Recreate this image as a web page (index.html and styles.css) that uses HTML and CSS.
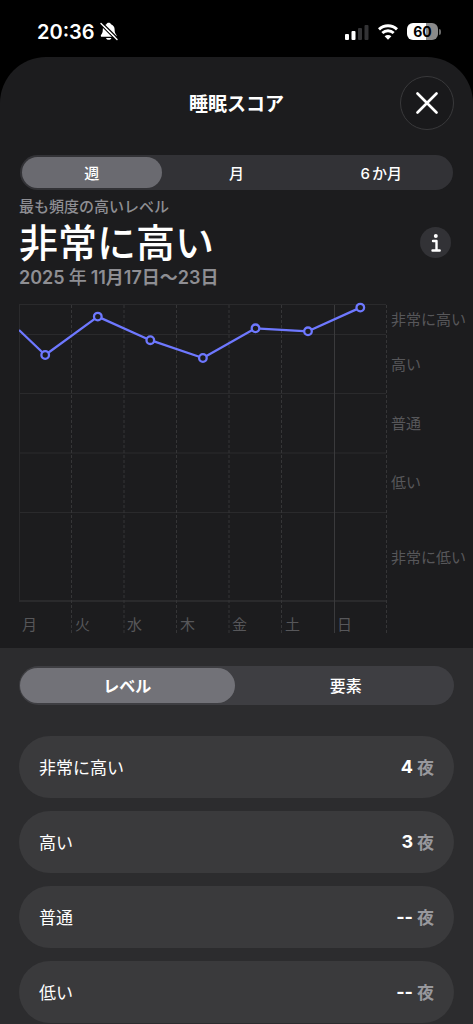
FILE: index.html
```html
<!DOCTYPE html>
<html lang="ja">
<head>
<meta charset="utf-8">
<meta name="viewport" content="width=device-width, initial-scale=1">
<title>睡眠スコア</title>
<link rel="stylesheet" href="styles.css">
</head>
<body>
<header class="status">
  <div class="status-left">
    <time class="clock">20:36</time>
    <svg class="bell" width="18" height="19" viewBox="0 0 18 19" aria-hidden="true">
      <path d="M8.700 .8C10 .8 10.800 1.400 11 2.300C13.600 3.300 14.600 5.200 14.600 7.600C14.600 10.600 15.300 11.700 16.400 13C16.900 13.800 16.500 14.800 15.600 14.800H1.800C.9 14.800.5 13.800 1 13C2.100 11.700 2.800 10.600 2.800 7.600C2.800 5.200 3.800 3.300 6.400 2.300C6.600 1.400 7.400 .8 8.700 .8Z" fill="#fff"/>
      <path d="M6 15.900H11.400C11 17.200 9.900 17.800 8.700 17.800S6.400 17.200 6 15.900Z" fill="#fff"/>
      <path d="M2 .5L18 16.500" stroke="#000" stroke-width="1.300"/>
      <path d="M.2 2.300L16.200 18.300" stroke="#000" stroke-width="1.300"/>
      <path d="M1 1.500L17 17.500" stroke="#fff" stroke-width="1.400" stroke-linecap="round"/>
    </svg>
  </div>
  <div class="status-right">
    <svg width="24" height="16" viewBox="0 0 24 16" aria-hidden="true">
      <rect x="0" y="10" width="4" height="6" rx="1" fill="#fff"/>
      <rect x="6.500" y="7" width="4" height="9" rx="1" fill="#fff"/>
      <rect x="13" y="4" width="4" height="12" rx="1" fill="#333335"/>
      <rect x="19.500" y="1" width="4" height="15" rx="1" fill="#333335"/>
    </svg>
    <svg width="20" height="16" viewBox="0 0 20 16" aria-hidden="true">
      <path d="M1 5.400C6 .6 14 .6 19 5.400M4.300 9C7.600 6 12.400 6 15.700 9" fill="none" stroke="#fff" stroke-width="2.900"/>
      <path d="M10 15.800L6.600 12.300C8.500 10.600 11.500 10.600 13.400 12.300Z" fill="#fff"/>
    </svg>
    <span class="battery"><span class="battery-body">60</span><span class="battery-cap"></span></span>
  </div>
</header>
<main class="sheet">
  <div class="titlebar">
    <h1 class="title">睡眠スコア</h1>
    <button class="close" type="button" aria-label="閉じる">
      <svg width="22" height="22" viewBox="0 0 22 22" aria-hidden="true"><path d="M1.500 1.500L20.500 20.500M20.500 1.500L1.500 20.500" stroke="#fff" stroke-width="2.600" stroke-linecap="round"/></svg>
    </button>
  </div>
  <div class="segments period" role="group" aria-label="期間">
    <button class="segment selected" type="button" aria-pressed="true">週</button>
    <button class="segment" type="button" aria-pressed="false">月</button>
    <button class="segment" type="button" aria-pressed="false"><span class="count">6</span>か月</button>
  </div>
  <section class="summary">
    <div class="summary-text">
      <p class="caption">最も頻度の高いレベル</p>
      <h2 class="level">非常に高い</h2>
      <p class="range">2025<span class="spaced">年</span>11月17日<span>〜</span>23日</p>
    </div>
    <button class="info" type="button" aria-label="情報">
      <svg width="10" height="18" viewBox="0 0 10 18" aria-hidden="true">
        <circle cx="4.800" cy="2" r="2" fill="#fff"/>
        <path d="M2 7H5.500V16.300M1.500 16.500H8.700" fill="none" stroke="#fff" stroke-width="2.400" stroke-linecap="round" stroke-linejoin="round"/>
      </svg>
    </button>
  </section>
  <svg class="chart" viewBox="0 0 454 332" role="img" aria-label="睡眠スコアの週間グラフ">
    <path class="grid" d="M0 2.500H367M0 32.500H367M0 91.500H367M0 151H367M0 210.500H367M.5 2V299"/>
    <path class="axis" d="M0 299H367"/>
    <path class="day-line" d="M52.500 3V331M105 3V331M157.500 3V331M210 3V331M262.500 3V331M367.500 3V331"/>
    <path class="week-line" d="M315.500 3V331"/>
    <path class="trend" d="M0 28L26.200 53L78.800 14.600L131.300 38.200L183.900 56L236.500 26.300L289 29.300L341.300 5.600"/>
    <g class="points">
      <circle cx="26.200" cy="53" r="3.800"/><circle cx="78.800" cy="14.600" r="3.800"/><circle cx="131.300" cy="38.200" r="3.800"/><circle cx="183.900" cy="56" r="3.800"/><circle cx="236.500" cy="26.300" r="3.800"/><circle cx="289" cy="29.300" r="3.800"/><circle cx="341.300" cy="5.600" r="3.800"/>
    </g>
    <g class="labels">
      <text x="372" y="23">非常に高い</text><text x="372" y="68">高い</text><text x="372" y="127">普通</text><text x="372" y="186">低い</text><text x="372" y="261">非常に低い</text>
      <text x="3" y="328">月</text><text x="56" y="328">火</text><text x="108" y="328">水</text><text x="161" y="328">木</text><text x="213" y="328">金</text><text x="266" y="328">土</text><text x="318" y="328">日</text>
    </g>
  </svg>
  <section class="details">
    <div class="segments view" role="group" aria-label="表示">
      <button class="segment selected" type="button" aria-pressed="true">レベル</button>
      <button class="segment" type="button" aria-pressed="false">要素</button>
    </div>
    <ul class="rows">
      <li class="row"><span>非常に高い</span><span class="nights"><b>4</b><span class="unit">夜</span></span></li>
      <li class="row"><span>高い</span><span class="nights"><b>3</b><span class="unit">夜</span></span></li>
      <li class="row"><span>普通</span><span class="nights"><b>--</b><span class="unit">夜</span></span></li>
      <li class="row"><span>低い</span><span class="nights"><b>--</b><span class="unit">夜</span></span></li>
    </ul>
  </section>
</main>
</body>
</html>
```
FILE: styles.css
```css
* { box-sizing: border-box; margin: 0; padding: 0; }
body {
  min-height: 100vh;
  display: flex;
  flex-direction: column;
  background: #000;
  color: #fff;
  font-family: Inter, "Noto Sans CJK JP", sans-serif;
}
button { border: 0; background: none; color: inherit; font: inherit; cursor: pointer; }
svg { display: block; flex-shrink: 0; }

.status {
  display: flex;
  justify-content: space-between;
  align-items: center;
  height: 57px;
  padding: 6px 32px 0 37px;
}
.status-left { display: flex; align-items: center; gap: 5px; }
.clock { font-size: 20px; font-weight: 600; line-height: 24px; }
.status-right { display: flex; align-items: center; gap: 9px; }
.battery { display: flex; align-items: center; gap: 1px; }
.battery-body {
  width: 31px;
  height: 17px;
  border-radius: 6px;
  background: linear-gradient(90deg, #fff 60%, #8a8a8a 60%);
  color: #000;
  font-size: 14px;
  font-weight: 700;
  line-height: 17px;
  text-align: center;
}
.battery-cap { width: 2px; height: 6px; border-radius: 0 2px 2px 0; background: #6a6a6a; }

.sheet {
  flex: 1;
  display: flex;
  flex-direction: column;
  border-radius: 46px 46px 0 0;
  background: #1c1c1e;
}
.titlebar {
  display: grid;
  grid-template-columns: 54px 1fr 54px;
  align-items: center;
  padding: 19px 19px 0 19px;
}
.title { grid-column: 2; padding-top: 4px; text-align: center; font-size: 19px; font-weight: 600; line-height: 28px; }
.close {
  display: grid;
  place-items: center;
  height: 54px;
  border: 1px solid #39393b;
  border-radius: 50%;
  background: #19191b;
}

.segments { display: grid; grid-auto-flow: column; grid-auto-columns: 1fr; border-radius: 20px; }
.segment { border-radius: 18px; font-weight: 500; }
.period { margin: 25px 20px 0 20px; padding: 2px; gap: 5px; background: #323236; }
.period .segment { height: 31px; font-size: 15px; }
.period .selected { background: #6a6a70; }
.count { margin-right: 2px; }

.summary {
  display: flex;
  justify-content: space-between;
  align-items: center;
  padding: 6px 22px 0 19px;
}
.caption { color: #8e8e93; font-size: 15px; font-weight: 500; line-height: 22px; }
.level { font-size: 39px; font-weight: 500; line-height: 48px; padding-top: 1px; }
.range { color: #8e8e93; font-size: 18px; font-weight: 600; line-height: 22px; }
.spaced { margin: 0 4px; font-weight: 500; }
.info {
  display: grid;
  place-items: center;
  width: 31px;
  height: 31px;
  border-radius: 50%;
  background: #323236;
}

.chart { width: calc(100% - 19px); height: auto; margin: 13px 0 14px 19px; }
.grid, .axis, .day-line, .week-line, .trend { fill: none; stroke-width: 1; }
.grid { stroke: #2a2a2c; }
.axis { stroke: #2a2a2c; stroke-width: 2; }
.day-line { stroke: #353537; stroke-dasharray: 3 2; }
.week-line { stroke: #3a3a3c; }
.trend { stroke: #6e78ff; stroke-width: 2.3; stroke-linejoin: round; }
.points { fill: #1c1c1e; stroke: #6e78ff; stroke-width: 2.3; }
.labels { fill: #57575a; font-size: 15px; font-weight: 400; }

.details { flex: 1; padding: 18px 19px 0; background: #2c2c2e; }
.view { padding: 2px 1px; gap: 4px; background: #3e3e42; }
.view .segment { height: 35px; padding-bottom: 2px; font-size: 16px; }
.view .selected { background: #727278; font-weight: 600; }
.rows { display: grid; gap: 13px; margin-top: 31px; list-style: none; }
.row {
  display: flex;
  justify-content: space-between;
  align-items: center;
  height: 62px;
  padding: 0 20px 2px;
  border-radius: 31px;
  background: #3a3a3c;
  font-size: 17px;
  font-weight: 400;
}
.nights { display: flex; align-items: center; gap: 4px; }
.nights b { padding-top: 1px; font-size: 18px; font-weight: 700; }
.unit { color: #98989d; font-weight: 600; }
```
